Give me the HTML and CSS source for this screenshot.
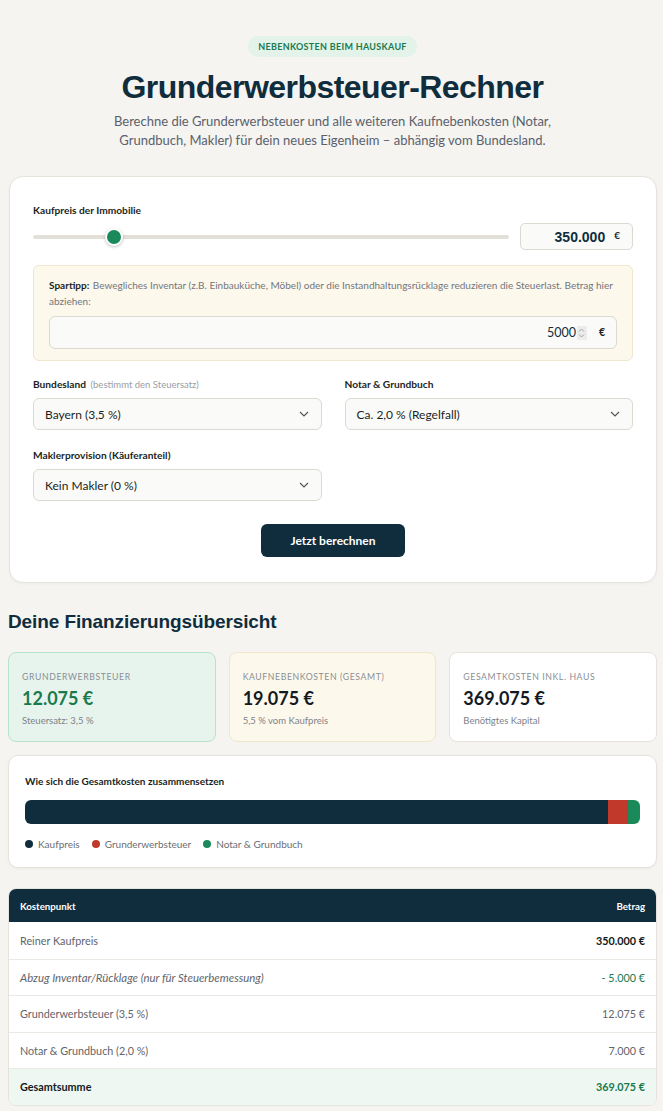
FILE: index.html
```html
<!DOCTYPE html>
<html lang="de">
<head>
<meta charset="utf-8">
<title>Grunderwerbsteuer-Rechner</title>
<link rel="stylesheet" href="styles.css">
</head>
<body>
<div class="page">
  <header class="hero">
    <span class="badge">NEBENKOSTEN BEIM HAUSKAUF</span>
    <h1>Grunderwerbsteuer-Rechner</h1>
    <p class="lead">Berechne die Grunderwerbsteuer und alle weiteren Kaufnebenkosten (Notar,<br>Grundbuch, Makler) für dein neues Eigenheim – abhängig vom Bundesland.</p>
  </header>

  <section class="card calc">
    <div class="label">Kaufpreis der Immobilie</div>
    <div class="price-row">
      <div class="slider">
        <div class="track"></div>
        <div class="thumb" style="left: 15.4%"></div>
      </div>
      <div class="price-box"><span class="price-val">350.000</span><span class="euro">€</span></div>
    </div>

    <div class="tip">
      <p><b>Spartipp:</b> Bewegliches Inventar (z.B. Einbauküche, Möbel) oder die Instandhaltungsrücklage reduzieren die Steuerlast. Betrag hier abziehen:</p>
      <div class="tip-input">
        <span class="tip-val">5000</span>
        <span class="spin"><svg width="7" height="12" viewBox="0 0 7 12"><path d="M1 4.5 L3.5 2 L6 4.5" fill="none" stroke="#9a9a9a" stroke-width="0.9"/><path d="M1 7.5 L3.5 10 L6 7.5" fill="none" stroke="#9a9a9a" stroke-width="0.9"/></svg></span>
        <span class="euro">€</span>
      </div>
    </div>

    <div class="grid">
      <div class="field">
        <div class="label">Bundesland <span class="hint">(bestimmt den Steuersatz)</span></div>
        <div class="select"><span>Bayern (3,5 %)</span><svg width="10" height="6" viewBox="0 0 10 6"><path d="M1 1 L5 5 L9 1" fill="none" stroke="#555" stroke-width="1.2"/></svg></div>
      </div>
      <div class="field">
        <div class="label">Notar &amp; Grundbuch</div>
        <div class="select"><span>Ca. 2,0 % (Regelfall)</span><svg width="10" height="6" viewBox="0 0 10 6"><path d="M1 1 L5 5 L9 1" fill="none" stroke="#555" stroke-width="1.2"/></svg></div>
      </div>
      <div class="field">
        <div class="label">Maklerprovision (Käuferanteil)</div>
        <div class="select"><span>Kein Makler (0 %)</span><svg width="10" height="6" viewBox="0 0 10 6"><path d="M1 1 L5 5 L9 1" fill="none" stroke="#555" stroke-width="1.2"/></svg></div>
      </div>
    </div>

    <div class="btn-row"><button class="btn">Jetzt berechnen</button></div>
  </section>

  <h2>Deine Finanzierungsübersicht</h2>

  <div class="stats">
    <div class="stat green">
      <div class="stat-label">GRUNDERWERBSTEUER</div>
      <div class="stat-val">12.075 €</div>
      <div class="stat-sub">Steuersatz: 3,5 %</div>
    </div>
    <div class="stat cream">
      <div class="stat-label">KAUFNEBENKOSTEN (GESAMT)</div>
      <div class="stat-val">19.075 €</div>
      <div class="stat-sub">5,5 % vom Kaufpreis</div>
    </div>
    <div class="stat">
      <div class="stat-label">GESAMTKOSTEN INKL. HAUS</div>
      <div class="stat-val">369.075 €</div>
      <div class="stat-sub">Benötigtes Kapital</div>
    </div>
  </div>

  <section class="card chart">
    <div class="chart-title">Wie sich die Gesamtkosten zusammensetzen</div>
    <div class="bar">
      <div class="seg navy" style="width: 94.83%"></div>
      <div class="seg red" style="width: 3.27%"></div>
      <div class="seg grn" style="width: 1.90%"></div>
    </div>
    <div class="legend">
      <span class="lg"><i class="dot navy"></i>Kaufpreis</span>
      <span class="lg"><i class="dot red"></i>Grunderwerbsteuer</span>
      <span class="lg"><i class="dot grn"></i>Notar &amp; Grundbuch</span>
    </div>
  </section>

  <table class="costs">
    <thead>
      <tr><th>Kostenpunkt</th><th class="r">Betrag</th></tr>
    </thead>
    <tbody>
      <tr><td>Reiner Kaufpreis</td><td class="r strong">350.000 €</td></tr>
      <tr><td class="it">Abzug Inventar/Rücklage (nur für Steuerbemessung)</td><td class="r gtxt">- 5.000 €</td></tr>
      <tr><td>Grunderwerbsteuer (3,5 %)</td><td class="r">12.075 €</td></tr>
      <tr><td>Notar &amp; Grundbuch (2,0 %)</td><td class="r">7.000 €</td></tr>
      <tr class="total"><td>Gesamtsumme</td><td class="r">369.075 €</td></tr>
    </tbody>
  </table>
</div>
</body>
</html>
```

FILE: styles.css
```css
* { box-sizing: border-box; }
html, body { margin: 0; padding: 0; }
body {
  background: #f5f4f0;
  font-family: Lato, "Liberation Sans", sans-serif;
  color: #0f2d3d;
}
.page {
  padding: 34px 6px 6px 8px;
}
.hero { text-align: center; }
.badge {
  display: inline-block;
  background: #e3f3ea;
  color: #1a7a4e;
  font-size: 9px;
  font-weight: 700;
  letter-spacing: 0.3px;
  padding: 5px 10px;
  border-radius: 10px;
}
h1 {
  font-family: "Liberation Sans", Arial, sans-serif;
  font-weight: 700;
  font-size: 32px;
  letter-spacing: -0.55px;
  margin: 11px 0 6px;
  line-height: 38px;
  color: #0f2d3d;
}
.lead {
  margin: 0;
  font-size: 13px;
  line-height: 19px;
  color: #5a616c;
}
.card {
  background: #fff;
  border: 1px solid #e6e3dc;
  border-radius: 14px;
  box-shadow: 0 1px 3px rgba(0,0,0,0.04);
}
.calc {
  margin: 26px 0 0 1px;
  padding: 27px 23px 25px;
}
.label {
  font-size: 10.2px;
  font-weight: 700;
  color: #1a1f24;
}
.hint { font-weight: 400; color: #9a9ea4; margin-left: 2px; font-size: 9.5px; }
.price-row {
  display: flex;
  align-items: center;
  gap: 11px;
  margin-top: 7px;
}
.slider {
  flex: 1;
  position: relative;
  height: 26px;
  display: flex;
  align-items: center;
}
.track {
  width: 100%;
  height: 4px;
  border-radius: 2px;
  background: #e3e0d8;
}
.thumb {
  position: absolute;
  top: 4px;
  width: 18px;
  height: 18px;
  margin-left: -1px;
  border-radius: 50%;
  background: #1b8a5a;
  border: 2px solid #fff;
  box-shadow: 0 1px 3px rgba(0,0,0,0.25);
}
.price-box {
  width: 113px;
  height: 27px;
  border: 1px solid #dcd9d2;
  border-radius: 5px;
  background: #fafaf8;
  display: flex;
  align-items: center;
  justify-content: flex-end;
  padding-right: 12px;
  gap: 9px;
}
.price-val {
  font-family: "Liberation Sans", Arial, sans-serif;
  font-weight: 700;
  font-size: 14px;
  color: #0f2d3d;
}
.euro {
  font-size: 10px;
  font-weight: 700;
  color: #1a1f24;
  position: relative;
  top: -2px;
}
.tip {
  margin-top: 15px;
  background: #fdf8ec;
  border: 1px solid #efe6cd;
  border-radius: 6px;
  padding: 11px 15px 11px;
}
.tip p {
  margin: 0;
  font-size: 10px;
  line-height: 16px;
  color: #72767c;
}
.tip p b { color: #1a1f24; margin-right: 1px; }
.tip-input {
  margin-top: 7px;
  height: 33px;
  background: #fafaf8;
  border: 1px solid #dcd9d2;
  border-radius: 6px;
  display: flex;
  align-items: center;
  justify-content: flex-end;
  padding-right: 11px;
}
.tip-val {
  font-size: 12.5px;
  color: #0f2d3d;
}
.spin {
  display: inline-flex;
  align-items: center;
  justify-content: center;
  width: 10px;
  height: 14px;
  background: #ececec;
  margin-left: 1px;
  margin-right: 12px;
}
.tip-input .euro { top: -1px; font-size: 10.5px; }
.grid {
  display: grid;
  grid-template-columns: 1fr 1fr;
  column-gap: 23px;
  row-gap: 19px;
  margin-top: 17px;
}
.field .label { margin-bottom: 8px; }
.select {
  height: 32px;
  border: 1px solid #dcd9d2;
  border-radius: 6px;
  background: #fafaf8;
  display: flex;
  align-items: center;
  justify-content: space-between;
  padding: 0 12px 0 11px;
  font-size: 12px;
  color: #1a1f24;
}
.btn-row { text-align: center; margin-top: 23px; }
.btn {
  width: 144px;
  height: 33px;
  border: 0;
  border-radius: 6px;
  background: #0f2d3d;
  color: #fff;
  font-family: Lato, "Liberation Sans", sans-serif;
  font-weight: 700;
  font-size: 12px;
}
h2 {
  font-family: "Liberation Sans", Arial, sans-serif;
  font-size: 19px;
  font-weight: 700;
  letter-spacing: -0.1px;
  margin: 28px 0 19px;
  color: #0f2d3d;
}
.stats {
  display: grid;
  grid-template-columns: 1fr 1fr 1fr;
  gap: 13px;
}
.stat {
  height: 90px;
  border-radius: 8px;
  background: #fff;
  border: 1px solid #e6e3dc;
  padding: 18px 13px 0;
}
.stat.green { background: #e7f4ed; border-color: #b9e2cd; }
.stat.cream { background: #fdf8ec; border-color: #f0e6cc; }
.stat-label {
  font-size: 8.7px;
  letter-spacing: 0.6px;
  color: #8a8f96;
}
.stat-val {
  font-size: 18px;
  font-weight: 700;
  margin-top: 5px;
  color: #141a22;
}
.stat.green .stat-val { color: #1a7a4e; }
.stat-sub {
  font-size: 9.5px;
  color: #7d8289;
  margin-top: 6px;
}
.chart {
  margin-top: 13px;
  border-radius: 10px;
  padding: 19px 16px 17px;
}
.chart-title {
  font-size: 10px;
  font-weight: 700;
  color: #1a1f24;
}
.bar {
  display: flex;
  height: 24px;
  border-radius: 6px;
  overflow: hidden;
  margin-top: 13px;
}
.seg.navy, .dot.navy { background: #0f2d3d; }
.seg.red, .dot.red { background: #c0392b; }
.seg.grn, .dot.grn { background: #1b8a5a; }
.legend {
  display: flex;
  gap: 12px;
  margin-top: 14px;
  font-size: 10px;
  color: #6a6e74;
}
.lg { display: inline-flex; align-items: center; gap: 5px; }
.dot { display: inline-block; width: 8px; height: 8px; border-radius: 50%; }
.costs {
  width: 100%;
  margin-top: 20px;
  border-collapse: separate;
  border-spacing: 0;
  background: #fff;
  border: 1px solid #e6e3dc;
  border-radius: 8px;
  overflow: hidden;
  font-size: 10.8px;
}
.costs th {
  background: #0f2d3d;
  color: #fff;
  font-size: 9.7px;
  font-weight: 700;
  text-align: left;
  height: 33px;
  padding: 0 11px;
}
.costs td {
  height: 36.5px;
  padding: 0 11px;
  color: #5f656d;
  border-top: 1px solid #ebe9e3;
}
.costs tbody tr:first-child td { border-top: 0; }
.costs .r { text-align: right; }
.costs .strong { color: #141a22; font-weight: 700; }
.costs .it { font-style: italic; font-size: 11.4px; }
.costs .gtxt { color: #1a7a4e; }
.costs tr.total td { background: #eef7f1; color: #141a22; font-weight: 700; }
.costs tr.total td.r { color: #1a7a4e; }
```
